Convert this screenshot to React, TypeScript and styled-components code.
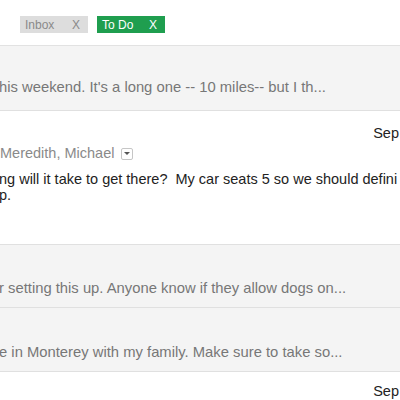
import React from 'react'
import styled, { createGlobalStyle } from 'styled-components'

const Global = createGlobalStyle`
  html, body {
    margin: 0;
    padding: 0;
    background: #ffffff;
    font-family: 'Liberation Sans', Arial, sans-serif;
  }
`

const Page = styled.div`
  width: 400px;
  height: 400px;
  overflow: hidden;
  background: #ffffff;
  display: flex;
  flex-direction: column;
`

const LabelBar = styled.div`
  height: 46px;
  flex-shrink: 0;
  display: flex;
  align-items: flex-start;
  gap: 9px;
  padding: 16px 0 0 20px;
  box-sizing: border-box;
  border-bottom: 1px solid #e2e2e2;
`

const Label = styled.div<{ $active?: boolean }>`
  width: 68px;
  height: 17px;
  padding: 0 8px 0 5px;
  box-sizing: border-box;
  display: flex;
  align-items: center;
  justify-content: space-between;
  font-size: 12px;
  background: ${p => (p.$active ? '#1f9e4f' : '#dddddd')};
  color: ${p => (p.$active ? '#ffffff' : '#8a8a8a')};
`

const Collapsed = styled.div<{ $h: number; $pb: number }>`
  height: ${p => p.$h}px;
  flex-shrink: 0;
  background: #f4f4f4;
  border-bottom: 1px solid #e0e0e0;
  box-sizing: border-box;
  display: flex;
  align-items: flex-end;
  padding-bottom: ${p => p.$pb}px;
`

const Snippet = styled.div`
  font-size: 14.8px;
  line-height: 17px;
  color: #777777;
  white-space: nowrap;
  margin-left: -1px;
`

const Expanded = styled.div<{ $h?: number; $pt?: number }>`
  flex-shrink: 0;
  height: ${p => (p.$h ? `${p.$h}px` : 'auto')};
  background: #ffffff;
  border-bottom: 1px solid #e0e0e0;
  box-sizing: border-box;
  display: flex;
  flex-direction: column;
  padding-top: ${p => p.$pt ?? 14}px;
`

const DateRow = styled.div`
  display: flex;
  justify-content: flex-end;
  font-size: 14.5px;
  line-height: 17px;
  color: #222222;
  white-space: nowrap;
  padding-right: 1px;
`

const Recipients = styled.div`
  display: flex;
  align-items: center;
  gap: 7px;
  font-size: 14.5px;
  line-height: 17px;
  color: #8a8a8a;
  margin-top: 3px;
`

const Caret = styled.span`
  width: 10px;
  height: 10px;
  border: 1px solid #c6c6c6;
  border-radius: 2px;
  display: inline-flex;
  align-items: center;
  justify-content: center;
  &::after {
    content: '';
    border-left: 3px solid transparent;
    border-right: 3px solid transparent;
    border-top: 3px solid #555555;
  }
`

const Body = styled.div`
  font-size: 14.5px;
  line-height: 16px;
  color: #222222;
  white-space: pre;
  margin-top: 9px;
  margin-left: -1px;
`

export default function App() {
  return (
    <Page>
      <Global />
      <LabelBar>
        <Label>
          <span>Inbox</span>
          <span>X</span>
        </Label>
        <Label $active>
          <span>To Do</span>
          <span>X</span>
        </Label>
      </LabelBar>
      <Collapsed $h={65} $pb={14}>
        <Snippet>his weekend. It's a long one -- 10 miles-- but I th...</Snippet>
      </Collapsed>
      <Expanded $h={134}>
        <DateRow>Sep</DateRow>
        <Recipients>
          <span>Meredith, Michael</span>
          <Caret />
        </Recipients>
        <Body>
          {'ng will it take to get there?  My car seats 5 so we should defini\np.'}
        </Body>
      </Expanded>
      <Collapsed $h={63} $pb={10}>
        <Snippet>r setting this up. Anyone know if they allow dogs on...</Snippet>
      </Collapsed>
      <Collapsed $h={64} $pb={10}>
        <Snippet>e in Monterey with my family. Make sure to take so...</Snippet>
      </Collapsed>
      <Expanded $pt={11}>
        <DateRow>Sep</DateRow>
      </Expanded>
    </Page>
  )
}
